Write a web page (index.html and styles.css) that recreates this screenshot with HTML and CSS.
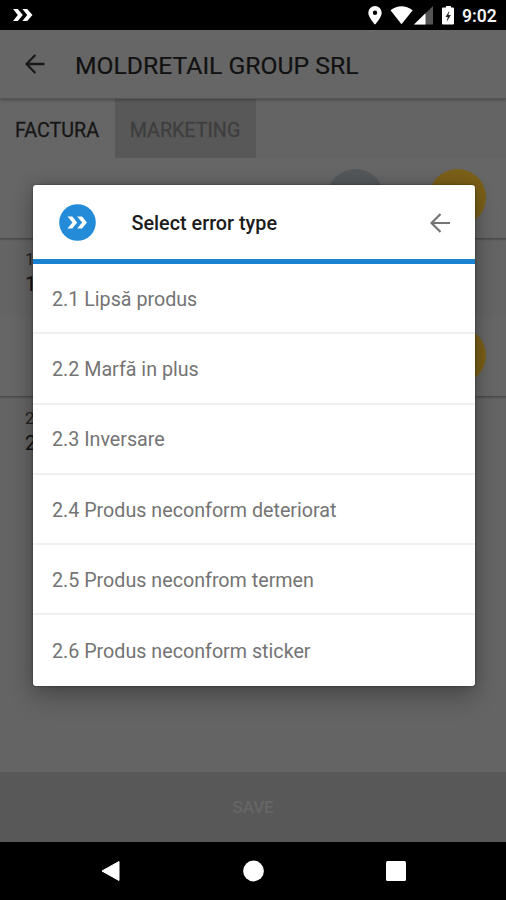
FILE: index.html
```html
<!DOCTYPE html>
<html lang="ro">
<head>
<meta charset="utf-8">
<title>Select error type</title>
<link rel="stylesheet" href="styles.css">
</head>
<body>
<div class="screen">
  <header class="status">
    <svg class="status-logo" width="20" height="14" viewBox="0 0 20 14"><path d="M0 1h4.800l5 6-5 6H0l4.800-6zM9.400 1h4.800l5.300 6-5.300 6H9.400l4.800-6z" fill="#fff"/></svg>
    <div class="status-icons">
      <svg width="132" height="20" viewBox="0 0 132 20">
        <path d="M7 1a6.700 6.700 0 0 0-6.700 6.700C.3 12.500 7 19.500 7 19.500s6.700-7 6.700-11.800A6.700 6.700 0 0 0 7 1zm0 4.600a2.200 2.200 0 1 1 0 4.400 2.200 2.200 0 0 1 0-4.400z" fill="#fff" fill-rule="evenodd"/>
        <path d="M22.500 5.200Q33.500-2.800 44.700 5.200L33.500 19.200z" fill="#fff"/>
        <path d="M46 19.500L65 1v18.500z" fill="#555"/>
        <path d="M46 19.500L57.500 8.300v11.200z" fill="#fff"/>
        <path d="M78 1h5v1.600h2q1 0 1 1V18.500q0 1-1 1H75q-1 0-1-1V3.600q0-1 1-1h3z" fill="#fff"/>
        <path d="M81.500 5.500L77.500 12h2.300l-1.200 5 4.300-7h-2.500z" fill="#222"/>
      </svg>
    </div>
    <span class="clock">9:02</span>
  </header>
  <div class="appbar">
    <svg class="arrow" width="20" height="20" viewBox="0 0 20 20"><path d="M19.500 10H2M10.300 1L1.500 10l8.800 9" fill="none" stroke="#181818" stroke-width="2.300"/></svg>
    <h1><span class="title">MOLDRETAIL GROUP SRL</span></h1>
  </div>
  <nav class="tabs">
    <span class="tab factura"><span>FACTURA</span></span>
    <span class="tab marketing"><span>MARKETING</span></span>
  </nav>
  <main class="content">
    <section class="actions first"><i class="dot gray"></i><i class="dot"></i></section>
    <section class="lines one"><span>1</span><b>1</b></section>
    <section class="actions second"><i class="dot"></i></section>
    <section class="lines two"><span>2</span><b>2</b></section>
  </main>
  <div class="save"><span>SAVE</span></div>
  <footer class="navbar">
    <svg width="20" height="24" viewBox="0 0 20 24"><path d="M19 2.500v19L2 12z" fill="#fff" stroke="#fff" stroke-linejoin="round"/></svg>
    <svg width="22" height="22" viewBox="0 0 22 22"><circle cx="10.500" cy="11" r="10.400" fill="#fff"/></svg>
    <svg width="20" height="20" viewBox="0 0 20 20"><rect width="20" height="20" rx="1.500" fill="#fff"/></svg>
  </footer>
  <div class="dialog">
    <div class="dialog-head">
      <svg class="logo" width="37" height="37" viewBox="0 0 37 37"><circle cx="18.500" cy="18.500" r="18.300" fill="#238bd7"/><path d="M8.500 12.600h4.800l4.900 5.900-4.900 5.900H8.500l4.900-5.900zM18.200 12.600h4.800l4.900 5.900-4.900 5.900h-4.800l4.900-5.900z" fill="#fff"/></svg>
      <h2><span>Select error type</span></h2>
      <svg class="arrow" width="20" height="20" viewBox="0 0 20 20"><path d="M20 10H2M10.500 1L1.500 10l9 9" fill="none" stroke="#757575" stroke-width="2.200"/></svg>
    </div>
    <ul>
      <li><span>2.1 Lipsă produs</span></li>
      <li><span>2.2 Marfă in plus</span></li>
      <li><span>2.3 Inversare</span></li>
      <li><span>2.4 Produs neconform deteriorat</span></li>
      <li><span>2.5 Produs neconfrom termen</span></li>
      <li><span>2.6 Produs neconform sticker</span></li>
    </ul>
  </div>
</div>
</body>
</html>
```
FILE: styles.css
```css
* { box-sizing: border-box; }
body { margin: 0; font-family: Roboto, "Liberation Sans", sans-serif; background: #000; }
svg { display: block; }
h1, h2, ul { margin: 0; padding: 0; list-style: none; }
.screen { position: relative; width: 506px; height: 900px; display: flex; flex-direction: column; background: #646464; overflow: hidden; }
.status { height: 30px; background: #000; display: flex; align-items: center; padding-left: 13px; }
.status-icons { margin-left: 335px; width: 94px; overflow: hidden; }
.clock { color: #f4f4f4; font-size: 17.500px; font-weight: 600; line-height: 30px; padding-top: 2px; }
.appbar { height: 69px; background: #666; display: flex; align-items: center; padding-left: 25px; border-bottom: 1px solid #555; box-shadow: 0 1px 3px rgba(0,0,0,.3); z-index: 1; }
.appbar h1 { margin-left: 30px; font-size: 24.700px; font-weight: 400; color: #111; line-height: 32px; padding-top: 4px; -webkit-text-stroke: .2px #111; }
.tabs { height: 59px; display: flex; }
.tab { display: flex; align-items: center; justify-content: center; font-size: 19.700px; padding: 3px 1px 0 0; -webkit-text-stroke: .3px currentColor; }
.factura { width: 115px; background: #666; color: #161616; }
.marketing { width: 141px; background: #585858; color: #3e3e3e; }
.content { flex: 1; display: flex; flex-direction: column; }
.actions { display: flex; justify-content: flex-end; gap: 45px; padding: 11px 20px 0 0; height: 81px; background: #666; border-bottom: 1px solid #4c4c4c; box-shadow: 0 1px 1px rgba(0,0,0,.15); }
.dot { width: 57px; height: 57px; border-radius: 50%; background: #7b6018; }
.dot.gray { background: #54585b; }
.lines { padding-left: 25px; display: flex; flex-direction: column; color: #222; font-size: 17px; line-height: 25px; }
.lines b { font-size: 20px; font-weight: 400; color: #111; }
.one { height: 77px; padding-top: 8px; }
.two { padding-top: 9px; }
.save { height: 70px; background: #585858; color: #666; font-size: 16.900px; font-weight: 500; display: flex; align-items: center; justify-content: center; }
.navbar { height: 58px; background: #000; display: grid; grid-template-columns: 22px 22px 20px; justify-content: center; column-gap: 121px; align-items: center; }
.dialog { position: absolute; left: 33px; top: 185px; width: 441.500px; height: 501px; background: #fff; border-radius: 3px; box-shadow: 0 0 2px rgba(0,0,0,.5), 0 13px 24px rgba(0,0,0,.2), 0 0 18px rgba(0,0,0,.2); }
.dialog-head { height: 79px; border-bottom: 5px solid #1b82d1; display: flex; align-items: center; padding: 1px 25px 0 26px; }
.dialog-head h2 { flex: 1; margin-left: 35.500px; font-size: 19.800px; font-weight: 500; color: #1c1c1c; line-height: 26px; padding-top: 2px; }
.dialog li { height: 70.300px; border-bottom: 2px solid #f0f0f0; display: flex; align-items: center; padding: 2px 0 0 19px; font-size: 19.700px; color: #747474; }
.dialog li:last-child { border: 0; }
```
